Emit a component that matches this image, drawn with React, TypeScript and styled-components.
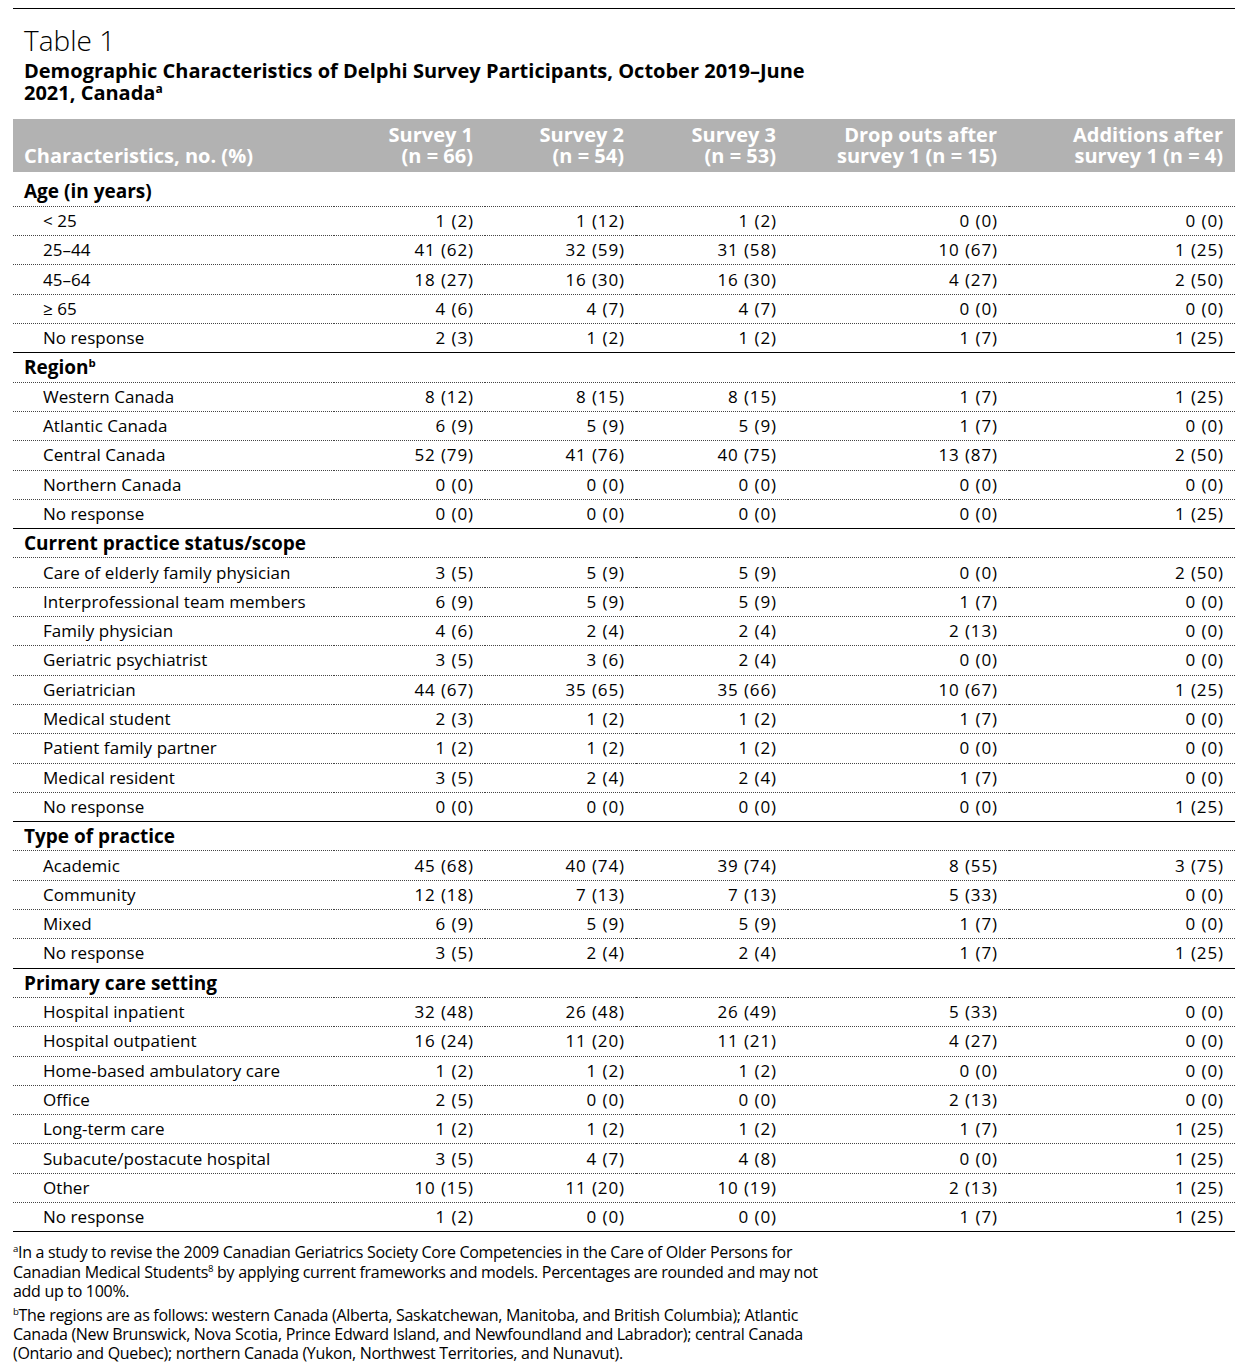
import React from "react";
import styled, { createGlobalStyle } from "styled-components";

const Global = createGlobalStyle`
  html, body { margin: 0; padding: 0; background: #fff; }
  body { font-family: "Open Sans", "Noto Sans", sans-serif; color: #000; }
`;

const Page = styled.div`
  width: 1222px;
  padding: 8px 5px 10px 13px;
`;

const TopRule = styled.div`
  border-top: 1px solid #000;
`;

const Caption = styled.div`
  padding: 14px 0 0 11px;
`;

const TableNo = styled.h1`
  margin: 0;
  font-size: 28px;
  font-weight: 300;
  line-height: 34px;
`;

const Title = styled.h2`
  margin: 3px 0 0;
  font-size: 20px;
  font-weight: 700;
  line-height: 22px;
  letter-spacing: 0;
`;

const Sup = styled.sup`
  font-size: 0.6em;
  line-height: 0;
  vertical-align: 0.6em;
`;

const Table = styled.table`
  margin-top: 15px;
  width: 1222px;
  border-collapse: collapse;
  table-layout: fixed;
  font-size: 17px;
`;

const HeadCell = styled.th<{ $left?: boolean }>`
  background: #b2b2b2;
  color: #fff;
  font-weight: 700;
  font-size: 20px;
  line-height: 21px;
  text-align: ${(p) => (p.$left ? "left" : "right")};
  vertical-align: bottom;
  padding: ${(p) => (p.$left ? "4px 0 6px 11px" : "4px 12px 6px 0")};
  height: 53px;
  box-sizing: border-box;
  white-space: nowrap;
  ${(p) => (p.$left ? "" : "font-stretch: 94%;")}
`;

const SectionCell = styled.td<{ $first?: boolean }>`
  font-weight: 700;
  font-size: 19px;
  padding: ${(p) => (p.$first ? "5px" : "0")} 0 0 11px;
  height: ${(p) => (p.$first ? "34.33px" : "29.33px")};
  box-sizing: border-box;
  border-bottom: 1px dotted #444;
  white-space: nowrap;
`;

const Row = styled.tr<{ $last?: boolean }>`
  height: 29.3px;
  border-bottom: ${(p) => (p.$last ? "1px solid #000" : "1px dotted #444")};
`;

const LabelCell = styled.td`
  padding: 0 0 1px 30px;
  white-space: nowrap;
  letter-spacing: 0.05px;
`;

const NumCell = styled.td`
  text-align: right;
  padding: 0 11px 1px 0;
  white-space: nowrap;
  letter-spacing: 0.9px;
`;

const Notes = styled.div`
  margin-top: 11px;
  font-size: 16px;
  line-height: 19.4px;
  letter-spacing: -0.3px;
  white-space: nowrap;
`;

const Note = styled.p`
  margin: 0 0 4px;
`;

type Sec = { title: string; sup?: string; rows: [string, string, string, string, string, string][] };

const sections: Sec[] = [
  {
    title: "Age (in years)",
    rows: [
      ["< 25", "1 (2)", "1 (12)", "1 (2)", "0 (0)", "0 (0)"],
      ["25–44", "41 (62)", "32 (59)", "31 (58)", "10 (67)", "1 (25)"],
      ["45–64", "18 (27)", "16 (30)", "16 (30)", "4 (27)", "2 (50)"],
      ["≥ 65", "4 (6)", "4 (7)", "4 (7)", "0 (0)", "0 (0)"],
      ["No response", "2 (3)", "1 (2)", "1 (2)", "1 (7)", "1 (25)"],
    ],
  },
  {
    title: "Region",
    sup: "b",
    rows: [
      ["Western Canada", "8 (12)", "8 (15)", "8 (15)", "1 (7)", "1 (25)"],
      ["Atlantic Canada", "6 (9)", "5 (9)", "5 (9)", "1 (7)", "0 (0)"],
      ["Central Canada", "52 (79)", "41 (76)", "40 (75)", "13 (87)", "2 (50)"],
      ["Northern Canada", "0 (0)", "0 (0)", "0 (0)", "0 (0)", "0 (0)"],
      ["No response", "0 (0)", "0 (0)", "0 (0)", "0 (0)", "1 (25)"],
    ],
  },
  {
    title: "Current practice status/scope",
    rows: [
      ["Care of elderly family physician", "3 (5)", "5 (9)", "5 (9)", "0 (0)", "2 (50)"],
      ["Interprofessional team members", "6 (9)", "5 (9)", "5 (9)", "1 (7)", "0 (0)"],
      ["Family physician", "4 (6)", "2 (4)", "2 (4)", "2 (13)", "0 (0)"],
      ["Geriatric psychiatrist", "3 (5)", "3 (6)", "2 (4)", "0 (0)", "0 (0)"],
      ["Geriatrician", "44 (67)", "35 (65)", "35 (66)", "10 (67)", "1 (25)"],
      ["Medical student", "2 (3)", "1 (2)", "1 (2)", "1 (7)", "0 (0)"],
      ["Patient family partner", "1 (2)", "1 (2)", "1 (2)", "0 (0)", "0 (0)"],
      ["Medical resident", "3 (5)", "2 (4)", "2 (4)", "1 (7)", "0 (0)"],
      ["No response", "0 (0)", "0 (0)", "0 (0)", "0 (0)", "1 (25)"],
    ],
  },
  {
    title: "Type of practice",
    rows: [
      ["Academic", "45 (68)", "40 (74)", "39 (74)", "8 (55)", "3 (75)"],
      ["Community", "12 (18)", "7 (13)", "7 (13)", "5 (33)", "0 (0)"],
      ["Mixed", "6 (9)", "5 (9)", "5 (9)", "1 (7)", "0 (0)"],
      ["No response", "3 (5)", "2 (4)", "2 (4)", "1 (7)", "1 (25)"],
    ],
  },
  {
    title: "Primary care setting",
    rows: [
      ["Hospital inpatient", "32 (48)", "26 (48)", "26 (49)", "5 (33)", "0 (0)"],
      ["Hospital outpatient", "16 (24)", "11 (20)", "11 (21)", "4 (27)", "0 (0)"],
      ["Home-based ambulatory care", "1 (2)", "1 (2)", "1 (2)", "0 (0)", "0 (0)"],
      ["Office", "2 (5)", "0 (0)", "0 (0)", "2 (13)", "0 (0)"],
      ["Long-term care", "1 (2)", "1 (2)", "1 (2)", "1 (7)", "1 (25)"],
      ["Subacute/postacute hospital", "3 (5)", "4 (7)", "4 (8)", "0 (0)", "1 (25)"],
      ["Other", "10 (15)", "11 (20)", "10 (19)", "2 (13)", "1 (25)"],
      ["No response", "1 (2)", "0 (0)", "0 (0)", "1 (7)", "1 (25)"],
    ],
  },
];

export default function App() {
  return (
    <Page>
      <Global />
      <TopRule />
      <Caption>
        <TableNo>Table 1</TableNo>
        <Title>
          Demographic Characteristics of Delphi Survey Participants, October 2019–June
          <br />
          2021, Canada<Sup>a</Sup>
        </Title>
      </Caption>
      <Table>
        <colgroup>
          <col style={{ width: 321 }} />
          <col style={{ width: 151 }} />
          <col style={{ width: 151 }} />
          <col style={{ width: 152 }} />
          <col style={{ width: 221 }} />
          <col style={{ width: 226 }} />
        </colgroup>
        <thead>
          <tr>
            <HeadCell $left>Characteristics, no. (%)</HeadCell>
            <HeadCell>Survey 1<br />(n = 66)</HeadCell>
            <HeadCell>Survey 2<br />(n = 54)</HeadCell>
            <HeadCell>Survey 3<br />(n = 53)</HeadCell>
            <HeadCell>Drop outs after<br />survey 1 (n = 15)</HeadCell>
            <HeadCell>Additions after<br />survey 1 (n = 4)</HeadCell>
          </tr>
        </thead>
        <tbody>
          {sections.map((s, si) => (
            <React.Fragment key={s.title}>
              <tr>
                <SectionCell $first={si === 0} colSpan={6}>
                  {s.title}
                  {s.sup && <Sup>{s.sup}</Sup>}
                </SectionCell>
              </tr>
              {s.rows.map((r, ri) => (
                <Row key={ri} $last={ri === s.rows.length - 1}>
                  <LabelCell>{r[0]}</LabelCell>
                  {r.slice(1).map((v, vi) => (
                    <NumCell key={vi}>{v}</NumCell>
                  ))}
                </Row>
              ))}
            </React.Fragment>
          ))}
        </tbody>
      </Table>
      <Notes>
        <Note>
          <Sup>a</Sup>In a study to revise the 2009 Canadian Geriatrics Society Core Competencies in the Care of Older Persons for
          <br />
          Canadian Medical Students<Sup>8</Sup> by applying current frameworks and models. Percentages are rounded and may not
          <br />
          add up to 100%.
        </Note>
        <Note>
          <Sup>b</Sup>The regions are as follows: western Canada (Alberta, Saskatchewan, Manitoba, and British Columbia); Atlantic
          <br />
          Canada (New Brunswick, Nova Scotia, Prince Edward Island, and Newfoundland and Labrador); central Canada
          <br />
          (Ontario and Quebec); northern Canada (Yukon, Northwest Territories, and Nunavut).
        </Note>
      </Notes>
    </Page>
  );
}
